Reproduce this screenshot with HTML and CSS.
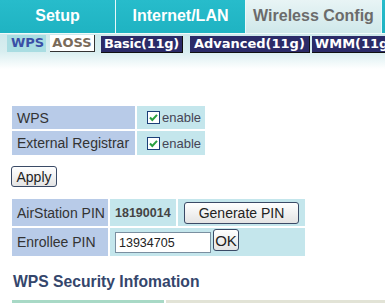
FILE: index.html
```html
<!DOCTYPE html>
<html>
<head>
<meta charset="utf-8">
<link rel="stylesheet" href="styles.css">
</head>
<body>
<div class="topnav">
  <div class="tab tab-setup">Setup</div>
  <div class="tab tab-inet">Internet/LAN</div>
  <div class="tab tab-active">Wireless Config</div>
  <div class="tab tab-rest"></div>
</div>
<div class="subnav">
  <span class="sub sub-sel">WPS</span>
  <span class="sub sub-light">AOSS</span>
  <span class="sub sub-dark sub-basic">Basic(11g)</span>
  <span class="sub sub-dark sub-adv">Advanced(11g)</span>
  <span class="sub sub-dark">WMM(11g)</span>
</div>
<div class="content">
  <table class="grid grid-enable">
    <tr><td class="lbl">WPS</td><td class="val"><span class="chk"><svg width="13" height="13" viewBox="0 0 13 13"><rect x="0.5" y="0.5" width="12" height="12" fill="#fff" stroke="#1c3f78"/><path d="M3 6.5 L5.3 9 L10 3.8" fill="none" stroke="#2aa040" stroke-width="2"/></svg></span>enable</td></tr>
    <tr><td class="lbl">External Registrar</td><td class="val"><span class="chk"><svg width="13" height="13" viewBox="0 0 13 13"><rect x="0.5" y="0.5" width="12" height="12" fill="#fff" stroke="#1c3f78"/><path d="M3 6.5 L5.3 9 L10 3.8" fill="none" stroke="#2aa040" stroke-width="2"/></svg></span>enable</td></tr>
  </table>
  <button class="btn btn-apply">Apply</button>
  <table class="grid grid-pin">
    <tr><td class="lbl lbl-pin">AirStation PIN</td><td class="val pinnum">18190014</td><td class="val gencell"><button class="btn btn-gen">Generate PIN</button></td></tr>
    <tr><td class="lbl lbl-pin">Enrollee PIN</td><td class="val" colspan="2"><div class="enroll"><span class="input">13934705</span><button class="btn btn-ok">OK</button></div></td></tr>
  </table>
  <h2 class="heading">WPS Security Infomation</h2>
  <div class="bottombar"><div class="bb-left"></div><div class="bb-right"></div></div>
</div>
</body>
</html>
```
FILE: styles.css
```css
html, body { margin: 0; padding: 0; background: #fff; }
body { font-family: "Liberation Sans", Arial, sans-serif; font-size: 14px; color: #333; width: 385px; height: 303px; overflow: hidden; }

.topnav { display: flex; height: 33px; background: linear-gradient(#27bccb, #1fb3c2); }
.tab { height: 33px; line-height: 32px; text-align: center; font-weight: bold; font-size: 16px; color: #fff; box-sizing: border-box; white-space: nowrap; }
.tab-setup { width: 116px; border-right: 1px solid #e8f8fa; }
.tab-inet { width: 130px; border-right: 1px solid #e8f8fa; }
.tab-active { width: 135px; color: #6b6b6b; background: linear-gradient(#e8f4f5, #cfe8ea); }
.tab-rest { flex: 1; border-left: 1px solid #e8f8fa; }

.subnav { display: flex; align-items: flex-start; height: 36px; padding: 1px 0 0 7px; box-sizing: border-box; border-top: 1px solid #f0fafa; background: linear-gradient(#cfe9ec 0, #d8eef0 50%, #ffffff 100%); white-space: nowrap; overflow: hidden; }
.sub { display: block; flex: none; height: 16px; line-height: 16px; font-family: "DejaVu Sans", Verdana, sans-serif; font-weight: bold; font-size: 13px; padding: 0 4px; }
.sub-sel { background: #a9dde2; color: #3a4fa6; width: 31px; height: 17px; text-align: center; margin-right: 4px; }
.sub-light { background: #fff; color: #7a6a5a; border-right: 1px solid #333; border-bottom: 1px solid #333; width: 40px; text-align: center; margin-right: 6px; padding: 0 2px; }
.sub-dark { background: #2b2b68; color: #fff; border-right: 1px solid #111; border-bottom: 1px solid #111; margin-top: 1px; padding: 0 3px; }
.sub-basic { letter-spacing: -0.3px; margin-right: 7px; }
.sub-adv { margin-right: 2px; padding: 0 4px; }

.content { padding: 35px 0 0 11px; }
.grid { border-collapse: separate; border-spacing: 2px; margin-left: -1px; }
.grid td { padding: 0 5px; white-space: nowrap; }
.grid-enable td { height: 23px; }
.grid-enable tr:nth-child(2) td { height: 24px; }
.grid-enable .lbl { width: 113px; }
.grid-enable .val { width: 58px; padding: 0 0 0 10px; font-size: 13px; }
.lbl { background: #b8cbe8; color: #333; }
.val { background: #c4e6ec; color: #445; }
.chk { display: inline-block; vertical-align: -2px; margin-right: 2px; }
.chk svg { display: block; }

.btn { font-family: "Liberation Sans", Arial, sans-serif; font-size: 14px; color: #222; background: linear-gradient(#ffffff, #e4e4e4); border: 1px solid #3a4a66; border-radius: 3px; padding: 0; white-space: nowrap; }
.btn-apply { display: block; width: 46px; height: 21px; margin: 9px 0 10px 0; }

.grid-pin tr:first-child td { height: 27px; }
.grid-pin tr:nth-child(2) td { height: 28px; }
.grid-pin .lbl-pin { width: 91px; padding: 0 0 0 5px; }
.grid-pin .pinnum { font-weight: bold; font-size: 12.5px; color: #444; width: 56px; }
.grid-pin .gencell { width: 115px; padding: 0 6px 0 6px; }
.btn-gen { width: 115px; height: 22px; display: block; }
.enroll { display: flex; align-items: center; }
.input { display: inline-block; width: 91px; height: 19px; line-height: 20px; border: 1px solid #7a8fa0; background: #fff; padding-left: 3px; font-size: 12.5px; color: #222; }
.btn-ok { width: 26px; height: 22px; margin-left: 2px; font-size: 15px; position: relative; top: -2px; }

.heading { margin: 15px 0 0 2px; font-size: 15.7px; font-weight: bold; color: #34466c; height: 18px; line-height: 18px; }
.bottombar { display: flex; margin-top: 9px; margin-left: 1px; height: 4px; }
.bb-left { width: 152px; background: #a8d9c6; }
.bb-right { flex: 1; margin-left: 2px; background: #e2e3d6; }
```
